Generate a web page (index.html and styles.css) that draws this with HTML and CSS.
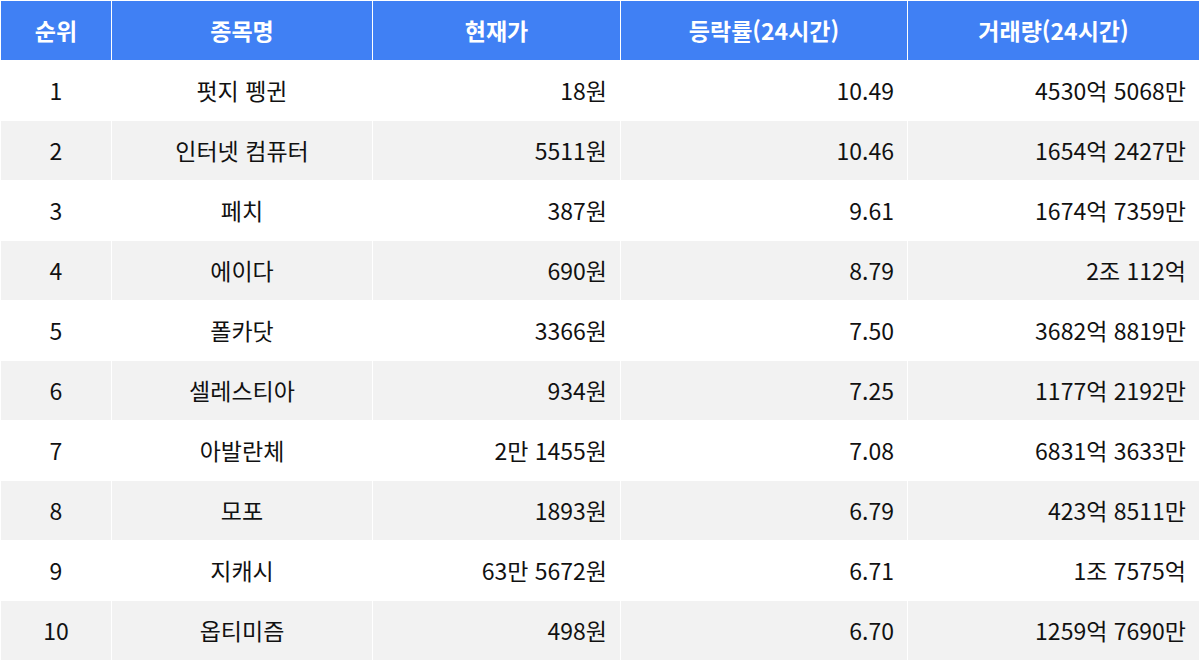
FILE: index.html
```html
<!DOCTYPE html>
<html lang="ko">
<head>
<meta charset="utf-8">
<link rel="stylesheet" href="styles.css">
</head>
<body>
<table class="coin-table">
  <colgroup>
    <col class="c-rank"><col class="c-name"><col class="c-price"><col class="c-rate"><col class="c-vol">
  </colgroup>
  <thead>
    <tr><th>순위</th><th>종목명</th><th>현재가</th><th>등락률(24시간)</th><th>거래량(24시간)</th></tr>
  </thead>
  <tbody>
    <tr><td class="center">1</td><td class="center">펏지 펭귄</td><td class="num">18원</td><td class="num">10.49</td><td class="num">4530억 5068만</td></tr>
    <tr><td class="center">2</td><td class="center">인터넷 컴퓨터</td><td class="num">5511원</td><td class="num">10.46</td><td class="num">1654억 2427만</td></tr>
    <tr><td class="center">3</td><td class="center">페치</td><td class="num">387원</td><td class="num">9.61</td><td class="num">1674억 7359만</td></tr>
    <tr><td class="center">4</td><td class="center">에이다</td><td class="num">690원</td><td class="num">8.79</td><td class="num">2조 112억</td></tr>
    <tr><td class="center">5</td><td class="center">폴카닷</td><td class="num">3366원</td><td class="num">7.50</td><td class="num">3682억 8819만</td></tr>
    <tr><td class="center">6</td><td class="center">셀레스티아</td><td class="num">934원</td><td class="num">7.25</td><td class="num">1177억 2192만</td></tr>
    <tr><td class="center">7</td><td class="center">아발란체</td><td class="num">2만 1455원</td><td class="num">7.08</td><td class="num">6831억 3633만</td></tr>
    <tr><td class="center">8</td><td class="center">모포</td><td class="num">1893원</td><td class="num">6.79</td><td class="num">423억 8511만</td></tr>
    <tr><td class="center">9</td><td class="center">지캐시</td><td class="num">63만 5672원</td><td class="num">6.71</td><td class="num">1조 7575억</td></tr>
    <tr><td class="center">10</td><td class="center">옵티미즘</td><td class="num">498원</td><td class="num">6.70</td><td class="num">1259억 7690만</td></tr>
  </tbody>
</table>
</body>
</html>
```
FILE: styles.css
```css
html, body {
  margin: 0;
  padding: 0;
  background: #ffffff;
}
body {
  font-family: "Noto Sans CJK KR", "Noto Sans", sans-serif;
  color: #111111;
}
.coin-table {
  width: 1200px;
  table-layout: fixed;
  border-collapse: separate;
  border-spacing: 1px;
  font-size: 23px;
}
.c-rank { width: 110px; }
.c-name { width: 260px; }
.c-price { width: 247px; }
.c-rate { width: 286px; }
.c-vol { width: 291px; }
.coin-table th,
.coin-table td {
  height: 59px;
  padding: 0 13px;
  box-sizing: border-box;
  white-space: nowrap;
  line-height: 1.2;
}
.coin-table th {
  background: #4080f4;
  color: #ffffff;
  font-weight: 700;
  text-align: center;
  font-size: 23px;
}
.coin-table tbody tr:nth-child(even) td {
  background: #f2f2f2;
}
.center { text-align: center; }
.num { text-align: right; }
```
